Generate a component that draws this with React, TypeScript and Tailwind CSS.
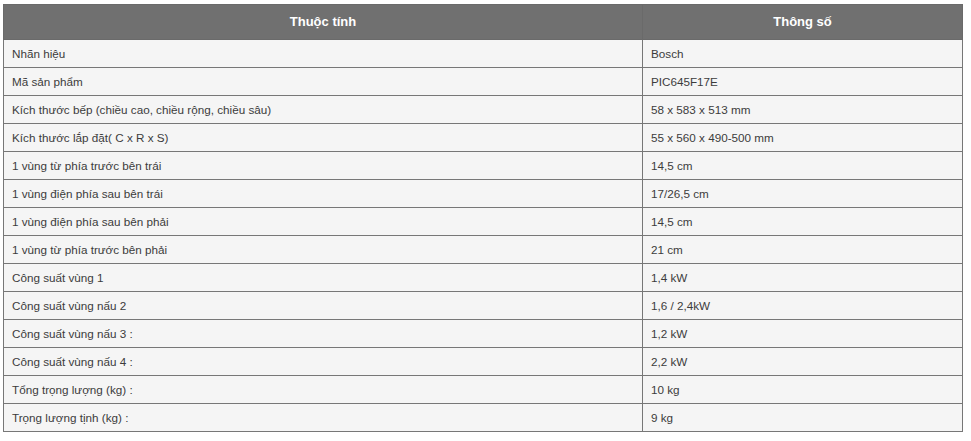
import React from 'react';

const specs: [string, string][] = [
  ['Nhãn hiệu', 'Bosch'],
  ['Mã sản phẩm', 'PIC645F17E'],
  ['Kích thước bếp (chiều cao, chiều rộng, chiều sâu)', '58 x 583 x 513 mm'],
  ['Kích thước lắp đặt( C x R x S)', '55 x 560 x 490-500 mm'],
  ['1 vùng từ phía trước bên trái', '14,5 cm'],
  ['1 vùng điện phía sau bên trái', '17/26,5 cm'],
  ['1 vùng điện phía sau bên phải', '14,5 cm'],
  ['1 vùng từ phía trước bên phải', '21 cm'],
  ['Công suất vùng 1', '1,4 kW'],
  ['Công suất vùng nấu 2', '1,6 / 2,4kW'],
  ['Công suất vùng nấu 3 :', '1,2 kW'],
  ['Công suất vùng nấu 4 :', '2,2 kW'],
  ['Tổng trọng lượng (kg) :', '10 kg'],
  ['Trọng lượng tịnh (kg) :', '9 kg'],
];

export default function App() {
  return (
    <div className="min-h-screen bg-white pt-[4px] pl-[3px] font-['Liberation_Sans',Arial,sans-serif]">
      <table className="w-[960px] border-collapse text-[11.7px] text-[#3c3c3c]">
        <thead>
          <tr className="h-[35px] bg-[#707070] text-white">
            <th className="w-[639px] border border-[#6a6a6a] text-center text-[13px] font-bold">Thuộc tính</th>
            <th className="border border-[#6a6a6a] text-center text-[13px] font-bold">Thông số</th>
          </tr>
        </thead>
        <tbody>
          {specs.map(([k, v]) => (
            <tr key={k} className="h-[28px] bg-[#f5f5f5]">
              <td className="border border-[#777] px-[8px] align-middle">{k}</td>
              <td className="border border-[#777] px-[8px] align-middle">{v}</td>
            </tr>
          ))}
        </tbody>
      </table>
    </div>
  );
}
